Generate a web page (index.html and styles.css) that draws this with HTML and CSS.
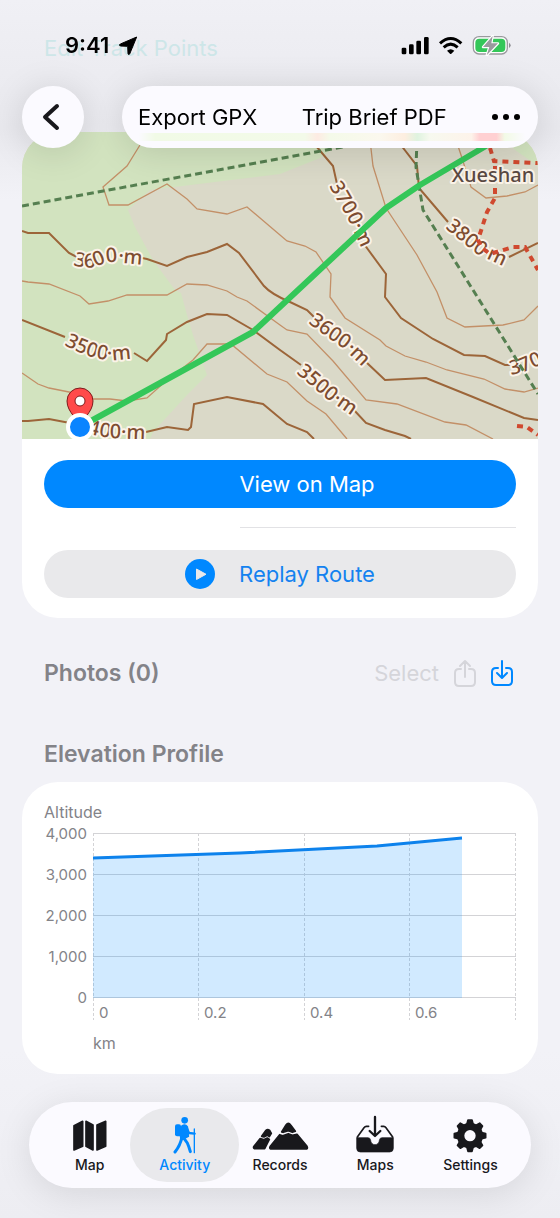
FILE: index.html
```html
<!DOCTYPE html>
<html lang="en">
<head>
    <meta charset="UTF-8">
    <meta name="viewport" content="width=device-width, initial-scale=1.0">
    <title>Activity</title>
    <link rel="stylesheet" href="styles.css">
</head>
<body>
    <header class="top-bar">
        <div class="status-bar">
            <div class="status-left">
                <span class="time">9:41</span>
                <svg class="location-icon" viewBox="0 0 57 57" aria-hidden="true">
                    <path d="M53 3 32 54 29 56 27 53 26 31 4 30 1 27 4 24z" fill="#000" stroke="#000" stroke-width="3" stroke-linejoin="round"/>
                </svg>
            </div>
            <!-- signal, wifi, battery -->
            <svg class="status-icons" viewBox="363 104 330 63" aria-hidden="true">
                <rect x="365" y="142" width="14" height="20" rx="4"/>
                <rect x="387" y="132" width="14" height="30" rx="4"/>
                <rect x="409" y="121" width="14" height="41" rx="4"/>
                <rect x="432" y="110" width="14" height="52" rx="4"/>
                <g fill="none" stroke="#000" stroke-width="9">
                    <path d="M480 129Q512 100 544 129"/>
                    <path d="M491 141Q512 122 533 141"/>
                </g>
                <path d="M501 151Q512 142 523 151L514 160Q512 162 510 160z"/>
                <rect x="580" y="109" width="102" height="52" rx="17" fill="#fff" stroke="#9a9a9e" stroke-width="4"/>
                <rect x="586" y="115" width="90" height="40" rx="12" fill="#34c759"/>
                <path d="M687 127q5 3 5 8t-5 8z" fill="#8e8e93"/>
                <path d="M638 107 609 140h19l-8 25 34-36h-20z" fill="#9a9a9e" stroke="#fff" stroke-width="7" stroke-linejoin="round" paint-order="stroke"/>
            </svg>
        </div>
        <div class="toolbar">
            <button class="back-button" type="button" aria-label="Back">
                <svg viewBox="0 0 20 28" aria-hidden="true"><path d="M16 3 4 14l12 11"/></svg>
            </button>
            <div class="toolbar-actions">
                <button type="button">Export GPX</button>
                <button type="button">Trip Brief PDF</button>
                <button class="more-button" type="button" aria-label="More">
                    <svg viewBox="0 0 30 8" aria-hidden="true"><circle cx="4" cy="4" r="3"/><circle cx="15" cy="4" r="3"/><circle cx="26" cy="4" r="3"/></svg>
                </button>
            </div>
        </div>
    </header>

    <main>
        <button class="edit-points" type="button">Edit Track Points</button>

        <section class="card route-card">
            <svg class="map" viewBox="22 132 516 307" role="img" aria-label="Route map">
                <rect x="22" y="132" width="516" height="307" fill="#dad9c8"/>
                <path d="M22 132H355L320 158 280 174 215 182 150 190 128 210 135 227 153 260 175 290 181 293 187 315 193 335 207 375 187 395 153 432 150 439H22z" fill="#d2e3bf"/>
                <path d="M498 132H538V166L515 150z" fill="#d2e3bf"/>

                <!-- minor contours -->
                <g class="contour-minor">
                    <path d="M22 148l8-3M140 145 127 166 103 187 109 205H128L167 184 187 199 197 209 227 214 247 207 280 235 287 241 305 246 316 252 331 274 330 297 345 318 380 340 386 346 405 356 426 362 447 370 484 379 505 389 524 392 538 388"/>
                    <path d="M22 281 28 282 49 284 80 296 89 304 108 301 127 295H167L187 284 207 285 227 291 237 297 247 301 280 325 287 330 307 334 333 361 366 400 397 404 445 422 466 425 493 439"/>
                    <path d="M22 373 38 384 49 388 69 392 93 399H110L127 401 147 398 166 381 193 360 207 344H231L267 374 287 382 307 401 326 414 347 439"/>
                    <path d="M370 140 373 166 386 208 417 255 437 292 447 318 465 327 503 325 524 320 538 306"/>
                    <path d="M456 140 462 158 471 187 486 198 507 196 525 192 538 185"/>
                </g>

                <!-- 100 m contours -->
                <g class="contour-major">
                    <path d="M22 231 28 233H49L69 253 77 257M142 258 147 259 167 266 187 257 207 252 227 244 239 253 264 286Q271 294 290 302L307 310 314 317M366 362 385 380 426 378 473 397 524 418 538 420"/>
                    <path d="M22 320 65 337M134 353 147 361 166 340 167 334 187 322 207 314 227 315 253 330 280 350 301 365M353 409 366 423 385 430 405 436 411 439"/>
                    <path d="M22 421H28L49 419 70 423M146 432 167 427 188 430 191 427 194 404 227 397 263 404 287 424 307 432 314 439"/>
                    <path d="M311 140 333 166 337 184M364 244 386 274 385 297 401 318 433 339 464 355 485 356 505 365H513"/>
                    <path d="M397 140 417 166 419 188 448 222M509 257 538 243"/>
                </g>

                <defs>
                    <path id="c1" d="M73 265Q88 270 98 266 108 261 118 262 130 264 150 265"/>
                    <path id="c2" d="M64 345Q86 357 106 360 120 361 146 356"/>
                    <path id="c3" d="M76 430Q95 436 110 438L160 440"/>
                    <path id="c4" d="M329 186 347 217 367 260"/>
                    <path id="c5" d="M445 228 477 254 520 274"/>
                    <path id="c6" d="M308 323 344 349 380 384"/>
                    <path id="c7" d="M296 373 327 399 368 427"/>
                    <path id="c8" d="M511 375 524 372 562 356"/>
                </defs>
                <g class="contour-label">
                    <text><textPath href="#c1">3600·m</textPath></text>
                    <text><textPath href="#c2">3500·m</textPath></text>
                    <text><textPath href="#c3">3400·m</textPath></text>
                    <text><textPath href="#c4">3700·m</textPath></text>
                    <text><textPath href="#c5">3800·m</textPath></text>
                    <text><textPath href="#c6">3600·m</textPath></text>
                    <text><textPath href="#c7">3500·m</textPath></text>
                    <text><textPath href="#c8">370</textPath></text>
                </g>

                <!-- boundaries and trails -->
                <g class="boundary">
                    <path d="M22 206 343 147"/>
                    <path d="M417 140 416 167 423 210 473 290 538 394"/>
                </g>
                <g class="trail">
                    <path d="M490 148 494 161 538 163"/>
                    <path d="M495 166V198L487 212 478 240 482 248 490 254 513 247 525 247 538 270"/>
                    <path d="M517 426 527 427 538 435"/>
                </g>
                <text class="peak-label" x="493" y="182" text-anchor="middle">Xueshan</text>

                <path class="route" d="M80 427 253 332 386 208 420 185 496 140"/>
                <path d="M80 430C79 418 67 413 67 401a13 13 0 0 1 26 0C93 413 81 418 80 430z" fill="#ff4a4a" stroke="#7d1c1c"/>
                <circle cx="80" cy="401" r="5" fill="#fff" stroke="#7d1c1c"/>
                <circle cx="80" cy="427" r="12" fill="#0a84ff" stroke="#fff" stroke-width="4"/>
            </svg>
            <div class="route-actions">
                <button class="pill-button primary" type="button">
                    <span class="button-icon"></span>
                    <span>View on Map</span>
                </button>
                <hr>
                <button class="pill-button" type="button">
                    <svg class="button-icon" viewBox="0 0 30 30" aria-hidden="true">
                        <circle cx="15" cy="15" r="15" fill="#0088ff"/>
                        <path d="M11.500 10v10.500l9.500-5.250z" fill="#e9e9eb" stroke="#e9e9eb" stroke-linejoin="round"/>
                    </svg>
                    <span>Replay Route</span>
                </button>
            </div>
        </section>

        <div class="section-header photos-header">
            <h2>Photos (0)</h2>
            <div class="photo-actions">
                <button type="button" disabled>Select</button>
                <button type="button" aria-label="Share" disabled>
                    <svg viewBox="0 0 22 28" aria-hidden="true"><path d="M7 10H5Q1 10 1 14V23Q1 27 5 27H17Q21 27 21 23V14Q21 10 17 10H15M11 18V2M6 7 11 2 16 7"/></svg>
                </button>
                <button class="import-button" type="button" aria-label="Import">
                    <svg viewBox="0 0 22 28" aria-hidden="true"><path d="M7 9H5Q1 9 1 13V22Q1 26 5 26H17Q21 26 21 22V13Q21 9 17 9H15M11 2V18M6 14 11 19 16 14"/></svg>
                </button>
            </div>
        </div>

        <div class="section-header">
            <h2>Elevation Profile</h2>
        </div>
        <section class="card chart-card">
            <svg class="chart" viewBox="44 800 472 252" role="img" aria-label="Elevation profile">
                <path class="grid" d="M93 833.500H516M93 874.500H516M93 915.500H516M93 956.500H516M93 997.500H516"/>
                <path class="grid dashed" d="M93.500 833V1020M198.500 833V1020M304.500 833V1020M409.500 833V1020M515.500 833V1020"/>
                <path class="area" d="M93 858 240 853 377 846 462 838V998H93z"/>
                <path class="line" d="M93 858 240 853 377 846 462 838"/>
                <text class="axis-title" x="44" y="818">Altitude</text>
                <g text-anchor="end">
                    <text x="87" y="839">4,000</text>
                    <text x="87" y="880">3,000</text>
                    <text x="87" y="921">2,000</text>
                    <text x="87" y="962">1,000</text>
                    <text x="87" y="1003">0</text>
                </g>
                <text x="99" y="1018">0</text>
                <text x="204" y="1018">0.2</text>
                <text x="310" y="1018">0.4</text>
                <text x="415" y="1018">0.6</text>
                <text class="axis-title" x="93" y="1049">km</text>
            </svg>
        </section>
    </main>

    <nav class="tab-bar">
        <a class="tab" href="#map">
            <svg viewBox="117 57 180 120" aria-hidden="true">
                <g stroke-width="5" stroke-linejoin="round">
                    <path d="M159 92 185 79V154L159 165zM195 79 216 90V165L195 154zM228 90 254 79V154L228 165z"/>
                </g>
            </svg>
            <span>Map</span>
        </a>
        <a class="tab active" href="#activity">
            <svg viewBox="403 57 180 120" aria-hidden="true">
                <circle cx="492" cy="76" r="10" stroke="none"/>
                <rect x="463" y="88" width="18" height="36" rx="6" stroke="none"/>
                <path d="M484 93Q494 87 500 96L503 124 482 134 478 118z" stroke-width="5" stroke-linejoin="round"/>
                <g fill="none" stroke-linecap="round" stroke-linejoin="round">
                    <path d="M498 98 505 114 522 116" stroke-width="7"/>
                    <path d="M484 126Q479 151 463 171M490 130 500 144Q505 155 509 170" stroke-width="9"/>
                    <path d="M521 102V173" stroke-width="4"/>
                </g>
            </svg>
            <span>Activity</span>
        </a>
        <a class="tab" href="#records">
            <svg viewBox="688 57 180 120" aria-hidden="true">
                <g stroke-width="5" stroke-linejoin="round">
                    <path d="M700 154 718 131 729 134 740 129 746 133 732 161H701Q697 158 700 154z"/>
                    <path d="M723 124 736 106Q741 101 747 106L752 115 746 125 740 121 730 126z"/>
                    <path d="M749 154 777 119 786 122 803 116 815 121 829 118 859 154Q862 160 858 162H750Q745 160 749 154z"/>
                    <path d="M783 111 796 90Q803 80 810 90L824 109 815 112 803 107 788 112z"/>
                </g>
            </svg>
            <span>Records</span>
        </a>
        <a class="tab" href="#maps">
            <svg viewBox="196 57 180 120" aria-hidden="true">
                <path d="M231 128H265Q272 128 273 136A13 13 0 0 0 299 136Q300 128 307 128H341V160Q341 171 330 171H242Q231 171 231 160z" stroke-width="2"/>
                <path d="M267 94H260Q256 94 253 98L233 126M305 94H312Q316 94 319 98L339 126" fill="none" stroke-width="5" stroke-linecap="round"/>
                <path d="M286 66V122M270 108 286 123 302 108" fill="none" stroke-width="7" stroke-linecap="round" stroke-linejoin="round"/>
            </svg>
            <span>Maps</span>
        </a>
        <a class="tab" href="#settings">
            <svg viewBox="480 57 180 120" aria-hidden="true">
                <circle cx="570" cy="122" r="28" fill="none" stroke-width="22"/>
                <g stroke-width="5" stroke-linejoin="round">
                    <path id="tooth" d="M560 90 564 75H576L580 90z"/>
                    <use href="#tooth" transform="rotate(45 570 122)"/>
                    <use href="#tooth" transform="rotate(90 570 122)"/>
                    <use href="#tooth" transform="rotate(135 570 122)"/>
                    <use href="#tooth" transform="rotate(180 570 122)"/>
                    <use href="#tooth" transform="rotate(225 570 122)"/>
                    <use href="#tooth" transform="rotate(270 570 122)"/>
                    <use href="#tooth" transform="rotate(315 570 122)"/>
                </g>
            </svg>
            <span>Settings</span>
        </a>
    </nav>
</body>
</html>
```
FILE: styles.css
```css
:root {
    --blue: #0088ff;
    --bg: #f2f2f7;
    --glass: #fbfaff;
    --gray: #838388;
}
* {
    box-sizing: border-box;
}
body {
    margin: 0;
    background: linear-gradient(#f0f0f5 0, #e9e9ee 128px, var(--bg) 200px, var(--bg) 1050px, #ededf2 1218px);
    font-family: Inter, "Open Sans", sans-serif;
    font-size: 22px;
    color: #000;
}
button {
    margin: 0;
    padding: 0;
    border: 0;
    background: none;
    font: inherit;
    color: inherit;
}
svg {
    display: block;
}
h2 {
    margin: 0;
    font-size: 23px;
    line-height: 32px;
    font-weight: 600;
    color: var(--gray);
}

/* header floats over the scrolled content */
.top-bar {
    position: fixed;
    top: 0;
    left: 0;
    right: 0;
    z-index: 2;
}
.status-bar {
    display: flex;
    justify-content: space-between;
    align-items: center;
    height: 90px;
    margin-bottom: -4px;
    padding: 0 49px 0 65px;
}
.status-left {
    display: flex;
    align-items: center;
    gap: 10px;
}
.time {
    font-size: 22px;
    font-weight: 600;
}
.location-icon {
    width: 19px;
    height: 19px;
}
.status-icons {
    width: 110px;
    height: 21px;
}
.toolbar {
    display: flex;
    gap: 38px;
    padding: 0 22px;
}
.back-button,
.toolbar-actions {
    height: 62px;
    border-radius: 31px;
    background-color: var(--glass);
    box-shadow: 0 4px 36px rgba(0, 0, 0, 0.13);
}
.back-button {
    display: flex;
    align-items: center;
    justify-content: center;
    width: 62px;
}
.back-button svg {
    width: 20px;
    height: 28px;
    margin-right: 4px;
    fill: none;
    stroke: #18181c;
    stroke-width: 4;
    stroke-linecap: round;
    stroke-linejoin: round;
}
.toolbar-actions {
    flex: 1;
    display: flex;
    align-items: center;
    justify-content: space-between;
    padding: 0 17px 0 16px;
    background-image: linear-gradient(90deg, transparent 4%, #f1fae6 8%, #f3fae9 44%, #fdebe3 47%, #f4fae9 50%, #fbf8ee 62%, #fdeee0 68%, #dff3df 71%, #f7f9ef 74%, #fdf3ea 84%, #ffd0d2 86%, #ffd0d2 90%, #f2fae6 92%, transparent 97%);
    background-size: 100% 8px;
    background-position: 0 47px;
    background-repeat: no-repeat;
}
.more-button svg {
    width: 30px;
    height: 8px;
}

main {
    padding: 0 22px;
}
.edit-points {
    display: block;
    margin: 32px 22px 68px;
    line-height: 32px;
    color: #cde6e8;
}
.card {
    border-radius: 36px;
    background: #fff;
    overflow: hidden;
}

.map {
    width: 100%;
    fill: none;
}
.contour-minor {
    stroke: #c39068;
    stroke-width: 1.3;
}
.contour-major {
    stroke: #9c6539;
    stroke-width: 2;
}
.contour-label,
.peak-label {
    font-family: "Noto Sans", "Open Sans", sans-serif;
    font-size: 20px;
    font-weight: 500;
    fill: #7d4c30;
    stroke: #fbf3e8;
    stroke-width: 4;
    stroke-linejoin: round;
    paint-order: stroke;
}
.peak-label {
    fill: #5a4942;
}
.boundary {
    stroke: #557f50;
    stroke-width: 3;
    stroke-dasharray: 7 4;
}
.trail {
    stroke: #d0492f;
    stroke-width: 4;
    stroke-dasharray: 6 5;
}
.route {
    stroke: #34c759;
    stroke-width: 6;
    stroke-linejoin: round;
}

.route-actions {
    padding: 21px 22px 20px;
}
.pill-button {
    display: flex;
    align-items: center;
    justify-content: center;
    gap: 24px;
    width: 100%;
    height: 48px;
    border-radius: 24px;
    background: #e9e9eb;
    color: #1482f0;
}
.pill-button.primary {
    background: var(--blue);
    color: #fff;
}
.button-icon {
    width: 30px;
    height: 30px;
}
.route-actions hr {
    height: 1px;
    margin: 19px 0 22px 196px;
    border: 0;
    background: #e2e2e5;
}

.section-header {
    display: flex;
    justify-content: space-between;
    align-items: center;
    margin: 49px 22px 12px;
}
.photos-header {
    margin: 39px 25px 0 22px;
}
.photo-actions {
    display: flex;
    align-items: center;
    gap: 15px;
    color: #d5d5da;
}
.photo-actions svg {
    width: 22px;
    height: 28px;
    fill: none;
    stroke: currentColor;
    stroke-width: 2;
    stroke-linecap: round;
    stroke-linejoin: round;
}
.import-button {
    color: var(--blue);
}

.chart-card {
    padding: 18px 22px 22px;
}
.chart {
    width: 100%;
    font-size: 15px;
    fill: var(--gray);
}
.axis-title {
    font-size: 16px;
}
.grid {
    fill: none;
    stroke: #d3d3d6;
}
.dashed {
    stroke-dasharray: 3 2;
}
.area {
    fill: rgba(0, 136, 255, 0.18);
}
.line {
    fill: none;
    stroke: #0d82ec;
    stroke-width: 3;
}

.tab-bar {
    display: flex;
    height: 86px;
    margin: 28px 29px 30px;
    padding: 12px 13px 0;
    border-radius: 43px;
    background: var(--glass);
    box-shadow: 0 6px 36px rgba(0, 0, 0, 0.1);
}
.tab {
    position: relative;
    flex: 1;
    display: flex;
    flex-direction: column;
    align-items: center;
    gap: 2px;
    font-size: 14px;
    line-height: 18px;
    font-weight: 500;
    color: #18181c;
    text-decoration: none;
}
.tab svg {
    position: relative;
    width: 60px;
    height: 40px;
    fill: currentColor;
    stroke: currentColor;
}
.tab span {
    position: relative;
}
.tab.active {
    color: var(--blue);
}
/* selected tab highlight */
.tab.active::before {
    content: "";
    position: absolute;
    top: -6px;
    bottom: 6px;
    left: -7px;
    right: -7px;
    border-radius: 38px;
    background: #e9e9ec;
}
```
